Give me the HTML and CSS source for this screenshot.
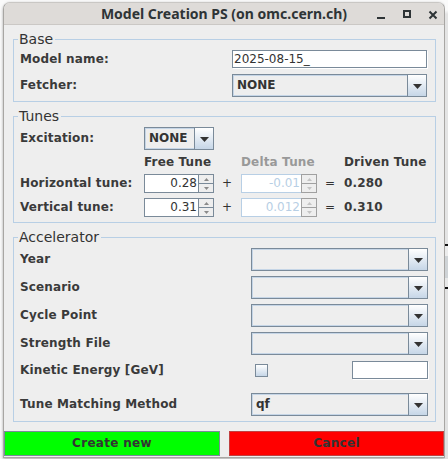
FILE: index.html
```html
<!DOCTYPE html>
<html>
<head>
<meta charset="utf-8">
<link rel="stylesheet" href="styles.css">
</head>
<body>
<div class="screen">
  <div class="window">
    <div class="titlebar">
      <span></span>
      <span class="title">Model Creation PS (on omc.cern.ch)</span>
      <div class="wbtns">
        <span class="wbtn"><svg width="10" height="10" viewBox="0 0 10 10"><rect x="1" y="7" width="8" height="2" fill="#2e3436"/></svg></span>
        <span class="wbtn"><svg width="10" height="10" viewBox="0 0 10 10"><rect x="2" y="1" width="6" height="6" fill="none" stroke="#2e3436" stroke-width="2"/></svg></span>
        <span class="wbtn"><svg width="10" height="10" viewBox="0 0 10 10"><path d="M1.5 1.5l7 7M8.5 1.5l-7 7" stroke="#2e3436" stroke-width="2"/></svg></span>
      </div>
    </div>
    <div class="content">
      <fieldset class="group base">
        <legend>Base</legend>
        <div class="frow tf-row">
          <span class="lbl">Model name:</span>
          <div class="textfield tf-model">2025-08-15_</div>
        </div>
        <div class="frow combo-row">
          <span class="lbl">Fetcher:</span>
          <div class="combo combo-base"><span class="combo-text">NONE</span><span class="combo-arrow"><svg width="9" height="5" viewBox="0 0 9 5"><path d="M0 0h9L4.5 5z" fill="#333"/></svg></span></div>
        </div>
      </fieldset>

      <fieldset class="group tunes">
        <legend>Tunes</legend>
        <div class="tgrid">
          <span class="lbl">Excitation:</span>
          <div class="combo combo-ex"><span class="combo-text">NONE</span><span class="combo-arrow"><svg width="9" height="5" viewBox="0 0 9 5"><path d="M0 0h9L4.5 5z" fill="#333"/></svg></span></div>
          <span></span><span></span><span></span><span></span>

          <span></span>
          <span class="lbl">Free Tune</span>
          <span></span>
          <span class="lbl disabled-head">Delta Tune</span>
          <span></span>
          <span class="lbl">Driven Tune</span>

          <span class="lbl">Horizontal tune:</span>
          <div class="spinner"><span class="spin-text">0.28</span><span class="spin-btns"><span class="spin-btn"><svg width="5" height="3" viewBox="0 0 5 3"><path d="M0 3h5L2.5 0z" fill="#8a8a8a"/></svg></span><span class="spin-btn"><svg width="5" height="3" viewBox="0 0 5 3"><path d="M0 0h5L2.5 3z" fill="#8a8a8a"/></svg></span></span></div>
          <span class="op">+</span>
          <div class="spinner disabled"><span class="spin-text">-0.01</span><span class="spin-btns"><span class="spin-btn"><svg width="5" height="3" viewBox="0 0 5 3"><path d="M0 3h5L2.5 0z" fill="#c4c4c4"/></svg></span><span class="spin-btn"><svg width="5" height="3" viewBox="0 0 5 3"><path d="M0 0h5L2.5 3z" fill="#c4c4c4"/></svg></span></span></div>
          <span class="op">=</span>
          <span class="lbl">0.280</span>

          <span class="lbl">Vertical tune:</span>
          <div class="spinner"><span class="spin-text">0.31</span><span class="spin-btns"><span class="spin-btn"><svg width="5" height="3" viewBox="0 0 5 3"><path d="M0 3h5L2.5 0z" fill="#8a8a8a"/></svg></span><span class="spin-btn"><svg width="5" height="3" viewBox="0 0 5 3"><path d="M0 0h5L2.5 3z" fill="#8a8a8a"/></svg></span></span></div>
          <span class="op">+</span>
          <div class="spinner disabled"><span class="spin-text">0.012</span><span class="spin-btns"><span class="spin-btn"><svg width="5" height="3" viewBox="0 0 5 3"><path d="M0 3h5L2.5 0z" fill="#c4c4c4"/></svg></span><span class="spin-btn"><svg width="5" height="3" viewBox="0 0 5 3"><path d="M0 0h5L2.5 3z" fill="#c4c4c4"/></svg></span></span></div>
          <span class="op">=</span>
          <span class="lbl">0.310</span>
        </div>
      </fieldset>

      <fieldset class="group accel">
        <legend>Accelerator</legend>
        <div class="arow">
          <span class="lbl">Year</span>
          <div class="combo combo-acc"><span class="combo-text"></span><span class="combo-arrow"><svg width="9" height="5" viewBox="0 0 9 5"><path d="M0 0h9L4.5 5z" fill="#333"/></svg></span></div>
        </div>
        <div class="arow">
          <span class="lbl">Scenario</span>
          <div class="combo combo-acc"><span class="combo-text"></span><span class="combo-arrow"><svg width="9" height="5" viewBox="0 0 9 5"><path d="M0 0h9L4.5 5z" fill="#333"/></svg></span></div>
        </div>
        <div class="arow">
          <span class="lbl">Cycle Point</span>
          <div class="combo combo-acc"><span class="combo-text"></span><span class="combo-arrow"><svg width="9" height="5" viewBox="0 0 9 5"><path d="M0 0h9L4.5 5z" fill="#333"/></svg></span></div>
        </div>
        <div class="arow">
          <span class="lbl">Strength File</span>
          <div class="combo combo-acc"><span class="combo-text"></span><span class="combo-arrow"><svg width="9" height="5" viewBox="0 0 9 5"><path d="M0 0h9L4.5 5z" fill="#333"/></svg></span></div>
        </div>
        <div class="arow krow">
          <span class="lbl">Kinetic Energy [GeV]</span>
          <div class="kfield">
            <span class="checkbox"></span>
            <div class="textfield tf-energy"></div>
          </div>
        </div>
        <div class="arow mrow">
          <span class="lbl">Tune Matching Method</span>
          <div class="combo combo-acc"><span class="combo-text">qf</span><span class="combo-arrow"><svg width="9" height="5" viewBox="0 0 9 5"><path d="M0 0h9L4.5 5z" fill="#333"/></svg></span></div>
        </div>
      </fieldset>

      <div class="buttons">
        <div class="btn btn-create">Create new</div>
        <div class="btn btn-cancel">Cancel</div>
      </div>
    </div>
  </div>
  <div class="behind">
    <div class="b-top"></div>
    <div class="b-line"></div>
    <div class="b-gap"></div>
    <div class="b-band"></div>
    <div class="b-gap2"></div>
    <div class="b-line"></div>
    <div class="b-rest"></div>
  </div>
</div>
</body>
</html>
```

FILE: styles.css
```css
* { box-sizing: border-box; }
html, body { margin: 0; padding: 0; }
body {
  width: 448px;
  height: 459px;
  overflow: hidden;
  background: #fafafa;
  font-family: "DejaVu Sans", "Liberation Sans", sans-serif;
  color: #333333;
}
.screen {
  display: flex;
  align-items: flex-start;
  padding: 2px 0 0 3px;
  height: 459px;
}
.window {
  width: 442px;
  height: 456px;
  flex: none;
  border: 1px solid #a8a6a3;
  border-top-color: #c9c7c4;
  border-radius: 7px 7px 0 0;
  background: #eeeeee;
  display: flex;
  flex-direction: column;
  box-shadow: 0 1px 3px rgba(0,0,0,0.35);
}
.titlebar {
  height: 22px;
  flex: none;
  display: grid;
  grid-template-columns: 1fr auto 1fr;
  align-items: center;
  background: #dedbd8;
  border-radius: 6px 6px 0 0;
  border-bottom: 1px solid #cbc8c5;
}
.title {
  font-family: "Noto Sans", "DejaVu Sans", sans-serif;
  font-weight: 700;
  font-size: 14px;
  color: #2e3436;
  line-height: 18px;
  padding-top: 1px;
}
.wbtns {
  display: flex;
  justify-content: flex-end;
  gap: 4px;
}
.wbtn {
  width: 22px;
  height: 20px;
  display: flex;
  align-items: center;
  justify-content: center;
  padding-top: 2px;
}
.content {
  display: flex;
  flex-direction: column;
  padding-top: 7px;
}
.group {
  margin: 0 8px 0 9px;
  padding: 4px 7px 5px 6px;
  border: 1px solid #b8cfe5;
  min-width: 0;
}
.group legend {
  font-size: 14px;
  line-height: 14px;
  height: 14px;
  padding: 0 2px 0 1px;
  margin-left: -2px;
  color: #333333;
}
.base { padding-bottom: 4px; }
.tunes, .accel { margin-top: 7px; }
.lbl {
  font-weight: 700;
  font-size: 12px;
  line-height: 15px;
  color: #3a3a3a;
  white-space: nowrap;
  letter-spacing: 0.15px;
}
.frow {
  display: grid;
  grid-template-columns: 212px 195px;
  align-items: center;
}
.tf-row { height: 18px; }
.combo-row { height: 23px; margin-top: 6px; }

.textfield {
  background: #ffffff;
  border: 1px solid #7a8a99;
  box-shadow: 1px 1px 0 #ffffff;
  font-size: 12px;
  line-height: 16px;
  padding-left: 1px;
  color: #333333;
}
.tf-model { height: 18px; width: 195px; }

.combo {
  display: flex;
  height: 23px;
  border: 1px solid #7a8a99;
  background: #eeeeee;
}
.combo-text {
  flex: 1;
  border: 1px solid #c5d5e6;
  border-right: none;
  font-weight: 700;
  font-size: 12px;
  line-height: 19px;
  padding-left: 3px;
  color: #333333;
}
.combo-arrow {
  width: 19px;
  flex: none;
  border-left: 1px solid #7a8a99;
  background: linear-gradient(#ffffff, #c6d6e7);
  display: flex;
  align-items: center;
  justify-content: center;
  padding-top: 2px;
}
.combo-base { width: 195px; }
.combo-ex { width: 70px; }
.combo-acc { width: 177px; }

.tgrid {
  display: grid;
  grid-template-columns: 124px 70px 27px 76px 27px 1fr;
  grid-template-rows: 23px 24px 24px 19px;
  align-items: center;
}
.tgrid > :nth-child(n+13):nth-child(-n+18) { align-self: start; }
.tgrid > :nth-child(n+13):nth-child(-n+18).lbl,
.tgrid > :nth-child(n+13):nth-child(-n+18).op { margin-top: 2px; }
.disabled-head { color: #999999; }
.op {
  font-size: 12px;
  line-height: 15px;
  color: #333333;
  text-align: center;
  padding-right: 1px;
}
.spinner {
  display: flex;
  height: 19px;
  border: 1px solid #7a8a99;
  background: #ffffff;
}
.spin-text {
  flex: 1;
  font-size: 12px;
  line-height: 17px;
  text-align: right;
  padding-right: 1px;
  color: #333333;
}
.spin-btns {
  width: 15px;
  flex: none;
  display: flex;
  flex-direction: column;
  border-left: 1px solid #7a8a99;
  background: #eeeeee;
}
.spin-btn {
  flex: 1;
  display: flex;
  align-items: center;
  justify-content: center;
}
.spin-btn + .spin-btn { border-top: 1px solid #7a8a99; }
.spinner.disabled { border-color: #b8cfe5; }
.spinner.disabled .spin-text { color: #b8cfe5; }
.spinner.disabled .spin-btns {
  width: 16px;
  margin: -1px -1px -1px 0;
  border: 1px solid #a0a0a0;
}
.spinner.disabled .spin-btn + .spin-btn { border-top-color: #a0a0a0; }

.arow {
  display: grid;
  grid-template-columns: 231px 177px;
  align-items: center;
  height: 23px;
}
.arow + .arow { margin-top: 5px; }
.arow.krow { height: 18px; margin-top: 6px; }
.arow.mrow { margin-top: 14px; }
.kfield {
  display: flex;
  align-items: center;
  justify-content: space-between;
  padding-left: 4px;
}
.checkbox {
  width: 13px;
  height: 13px;
  border: 1px solid #7a8a99;
  background: linear-gradient(#ffffff, #c6d6e7);
  margin-top: 1px;
}
.tf-energy { width: 76px; height: 18px; }

.buttons {
  display: grid;
  grid-template-columns: 216px 1fr;
  column-gap: 9px;
  margin-top: 9px;
}
.btn {
  height: 25px;
  border: 1px solid #7a8a99;
  font-weight: 700;
  font-size: 12px;
  letter-spacing: 0.3px;
  line-height: 23px;
  text-align: center;
  color: #333333;
}
.btn-create { background: #00ff00; }
.btn-cancel { background: #ff0000; border-color: #c04040; }

.behind {
  flex: 1;
  display: flex;
  flex-direction: column;
  height: 459px;
  background: #e4e4e4;
}
.b-top { height: 242px; background: linear-gradient(#fafafa 0, #fafafa 8px, #e4e4e4 12px); }
.b-line { height: 2px; background: #111111; }
.b-gap { height: 10px; background: #ececec; }
.b-band { height: 22px; background: #cfd3d6; }
.b-gap2 { height: 9px; background: #e8e8e8; }
.b-rest { flex: 1; background: #e2e2e2; }
```
